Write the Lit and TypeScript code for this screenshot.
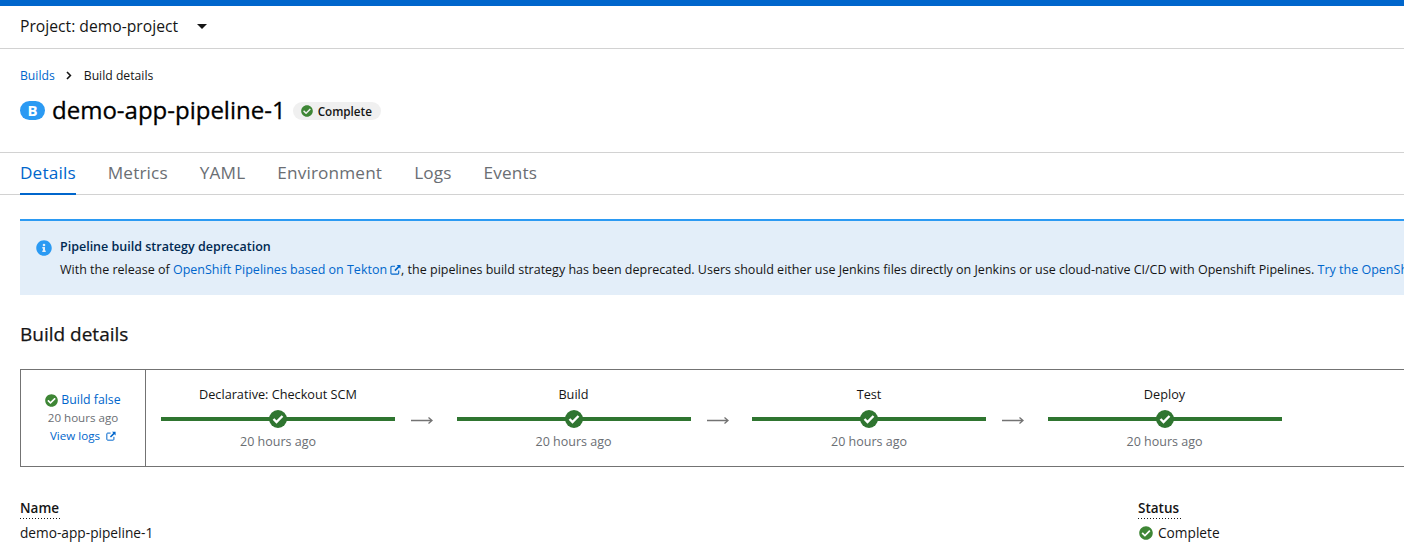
import { LitElement, html, css, svg } from "lit";
import { customElement } from "lit/decorators.js";

const checkCircle = svg`<path fill="currentColor" d="M504 256c0 137-111 248-248 248S8 393 8 256 119 8 256 8s248 111 248 248zM227 387l184-184c6-6 6-16 0-22l-23-23c-6-6-16-6-22 0L216 308l-70-70c-6-6-16-6-22 0l-23 23c-6 6-6 16 0 22l104 104c6 6 16 6 22 0z"/>`;
const infoCircle = svg`<path fill="currentColor" d="M256 8C119 8 8 119 8 256s111 248 248 248 248-111 248-248S393 8 256 8zm0 110a42 42 0 1 1 0 84 42 42 0 0 1 0-84zm56 254c0 7-5 12-12 12h-88c-7 0-12-5-12-12v-24c0-7 5-12 12-12h12v-64h-12c-7 0-12-5-12-12v-24c0-7 5-12 12-12h64c7 0 12 5 12 12v100h12c7 0 12 5 12 12v24z"/>`;

const stages = ["Declarative: Checkout SCM", "Build", "Test", "Deploy"];

@customElement("app-root")
export class AppRoot extends LitElement {
  static styles = css`
    :host {
      display: block;
      width: 1404px;
      height: 555px;
      overflow: hidden;
      background: #fff;
      color: #151515;
      font-family: "Open Sans", "Liberation Sans", sans-serif;
      font-size: 14px;
    }
    a {
      color: #06c;
      text-decoration: none;
    }
    svg {
      display: block;
      flex: none;
    }
    .topline {
      height: 6px;
      background: #06c;
    }
    .project {
      height: 43px;
      box-sizing: border-box;
      border-bottom: 1px solid #d2d2d2;
      display: flex;
      align-items: center;
      gap: 19px;
      padding: 0 20px 2px;
      font-size: 15.7px;
    }
    .caret {
      width: 0;
      height: 0;
      border-left: 5px solid transparent;
      border-right: 5px solid transparent;
      border-top: 5px solid #151515;
    }
    .heading {
      height: 103px;
      box-sizing: border-box;
      padding: 18px 20px 0;
    }
    .crumbs {
      display: flex;
      align-items: center;
      gap: 11.5px;
      height: 17px;
      font-size: 12.2px;
    }
    .title-row {
      display: flex;
      align-items: center;
      margin-top: 8px;
      height: 34px;
    }
    .badge-b {
      width: 25px;
      height: 19px;
      border-radius: 10px;
      background: #2b9af3;
      color: #fff;
      font-size: 15px;
      font-weight: 700;
      line-height: 19px;
      text-align: center;
      margin-right: 7px;
      margin-top: 3px;
    }
    h1 {
      margin: 0;
      font-size: 24px;
      font-weight: 500;
      -webkit-text-stroke: 0.3px #000;
      color: #000;
    }
    .pill {
      display: flex;
      align-items: center;
      gap: 5px;
      height: 18px;
      margin-left: 7px;
      margin-top: 3px;
      padding: 0 9px 0 8px;
      border-radius: 9px;
      background: #f0f0f0;
      font-size: 11.7px;
      font-weight: 600;
    }
    .pill svg {
      color: #3e8635;
    }
    .tabs {
      height: 43px;
      box-sizing: border-box;
      display: flex;
      gap: 32px;
      padding: 0 20px;
      border-top: 1px solid #d2d2d2;
      border-bottom: 1px solid #d2d2d2;
      font-size: 17.2px;
      letter-spacing: 0.15px;
      color: #6a6e73;
    }
    .tab {
      height: 42px;
      box-sizing: border-box;
      line-height: 39px;
    }
    .tab.active {
      color: #06c;
      border-bottom: 2px solid #06c;
    }
    .body {
      padding: 24px 0 0 20px;
    }
    .alert {
      height: 76px;
      box-sizing: border-box;
      border-top: 2px solid #2b9af3;
      background: #e3eef9;
      display: flex;
      gap: 8px;
      padding: 16px 16px 0;
      font-size: 12.5px;
      white-space: nowrap;
      overflow: hidden;
    }
    .alert > svg {
      color: #2b9af3;
      margin-top: 3px;
    }
    .alert-title {
      color: #002952;
      font-weight: 600;
      line-height: 20px;
    }
    .alert-text {
      line-height: 20px;
      margin-top: 3px;
    }
    .ext {
      vertical-align: -1px;
      margin-left: 3px;
    }
    h2 {
      margin: 26px 0 0;
      height: 26px;
      line-height: 26px;
      font-size: 19px;
      font-weight: 500;
      -webkit-text-stroke: 0.25px #151515;
    }
    .pipeline {
      display: flex;
      height: 98px;
      box-sizing: border-box;
      margin-top: 22px;
      border: 1px solid #737373;
      border-right: 0;
    }
    .summary {
      width: 125px;
      flex: none;
      box-sizing: border-box;
      border-right: 1px solid #737373;
      display: flex;
      flex-direction: column;
      align-items: center;
      justify-content: center;
      font-size: 11.6px;
      line-height: 18px;
    }
    .summary .name {
      display: flex;
      align-items: center;
      gap: 3px;
      font-size: 12.3px;
    }
    .summary .name svg {
      color: #3e8635;
    }
    .muted {
      color: #6a6e73;
    }
    .stages {
      display: flex;
      align-items: flex-start;
      padding-left: 15px;
    }
    .stage {
      width: 234px;
      display: flex;
      flex-direction: column;
      align-items: center;
      font-size: 12.7px;
    }
    .stage-name {
      height: 17px;
      line-height: 17px;
      margin-top: 16px;
    }
    .track {
      align-self: stretch;
      height: 4px;
      margin-top: 14px;
      background: #2f7530;
      position: relative;
    }
    .dot {
      position: absolute;
      left: 50%;
      top: 50%;
      width: 18px;
      height: 18px;
      margin: -9px 0 0 -9px;
      border-radius: 50%;
      background: #2f7530;
      color: #fff;
      display: flex;
      align-items: center;
      justify-content: center;
    }
    .stage-time {
      margin-top: 12px;
      line-height: 17px;
      font-size: 12.5px;
      color: #6a6e73;
    }
    .arrow {
      width: 61.5px;
      box-sizing: border-box;
      flex: none;
      margin-top: 46px;
      padding-left: 16px;
      color: #737373;
    }
    .meta {
      display: grid;
      grid-template-columns: 1118px 1fr;
      margin-top: 32px;
      font-size: 13.7px;
    }
    .term {
      font-weight: 600;
      font-size: 13.5px;
      line-height: 18px;
      height: 18px;
    }
    .term span {
      display: inline-block;
      line-height: 17px;
      padding: 0 2px 0 0;
      background-image: radial-gradient(circle, #151515 0.5px, transparent 0.6px);
      background-size: 3px 1px;
      background-repeat: repeat-x;
      background-position: 2px 100%;
      height: 19px;
    }
    .value {
      margin-top: 7px;
      line-height: 18px;
      display: flex;
      align-items: center;
      gap: 5px;
    }
    .value svg {
      color: #3e8635;
      margin-left: 1px;
    }
  `;

  ext(size: number) {
    return html`<svg class="ext" width=${size} height=${size} viewBox="0 0 12 12" style="display:inline-block">
      <path fill="none" stroke="currentColor" stroke-width="1.2" d="M9.5 7v3a1 1 0 0 1-1 1H2a1 1 0 0 1-1-1V3.5a1 1 0 0 1 1-1h3.5"/>
      <path fill="currentColor" d="M7.2 1H11.5V5.3L10 3.8 6 7.8 4.7 6.5 8.7 2.5z"/>
    </svg>`;
  }

  check(size: number) {
    return html`<svg width=${size} height=${size} viewBox="0 0 512 512">${checkCircle}</svg>`;
  }

  render() {
    return html`
      <div class="topline"></div>
      <div class="project">
        <span>Project: demo-project</span>
        <span class="caret"></span>
      </div>
      <div class="heading">
        <div class="crumbs">
          <a href="#">Builds</a>
          <svg width="6" height="9" viewBox="0 0 6 9">
            <path fill="none" stroke="#151515" stroke-width="1.6" d="M1 1l3.4 3.5L1 8"/>
          </svg>
          <span>Build details</span>
        </div>
        <div class="title-row">
          <span class="badge-b">B</span>
          <h1>demo-app-pipeline-1</h1>
          <span class="pill">${this.check(12)}Complete</span>
        </div>
      </div>
      <div class="tabs">
        ${["Details", "Metrics", "YAML", "Environment", "Logs", "Events"].map(
          (t, i) => html`<span class="tab ${i === 0 ? "active" : ""}">${t}</span>`
        )}
      </div>
      <div class="body">
        <div class="alert">
          <svg width="16" height="16" viewBox="0 0 512 512">${infoCircle}</svg>
          <div>
            <div class="alert-title">Pipeline build strategy deprecation</div>
            <div class="alert-text">
              With the release of
              <a href="#">OpenShift Pipelines based on Tekton${this.ext(11)}</a>, the
              pipelines build strategy has been deprecated. Users should either use
              Jenkins files directly on Jenkins or use cloud-native CI/CD with Openshift
              Pipelines. <a href="#">Try the OpenShift Pipelines Operator</a>
            </div>
          </div>
        </div>
        <h2>Build details</h2>
        <div class="pipeline">
          <div class="summary">
            <div class="name">${this.check(13)}<a href="#">Build false</a></div>
            <div class="muted">20 hours ago</div>
            <a href="#">View logs ${this.ext(10)}</a>
          </div>
          <div class="stages">
            ${stages.map(
              (name, i) => html`
                ${i > 0
                  ? html`<div class="arrow">
                      <svg width="22" height="9" viewBox="0 0 22 9">
                        <path fill="none" stroke="currentColor" stroke-width="1.3" d="M0 4.5h21M17.5 1.5l3.5 3-3.5 3"/>
                      </svg>
                    </div>`
                  : ""}
                <div class="stage">
                  <div class="stage-name">${name}</div>
                  <div class="track">
                    <span class="dot">
                      <svg width="12" height="10" viewBox="0 0 12 10">
                        <path fill="none" stroke="currentColor" stroke-width="2.4" d="M1.5 5l3 3 6-6"/>
                      </svg>
                    </span>
                  </div>
                  <div class="stage-time">20 hours ago</div>
                </div>
              `
            )}
          </div>
        </div>
        <div class="meta">
          <div>
            <div class="term"><span>Name</span></div>
            <div class="value">demo-app-pipeline-1</div>
          </div>
          <div>
            <div class="term"><span>Status</span></div>
            <div class="value">${this.check(14)}<span>Complete</span></div>
          </div>
        </div>
      </div>
    `;
  }
}
